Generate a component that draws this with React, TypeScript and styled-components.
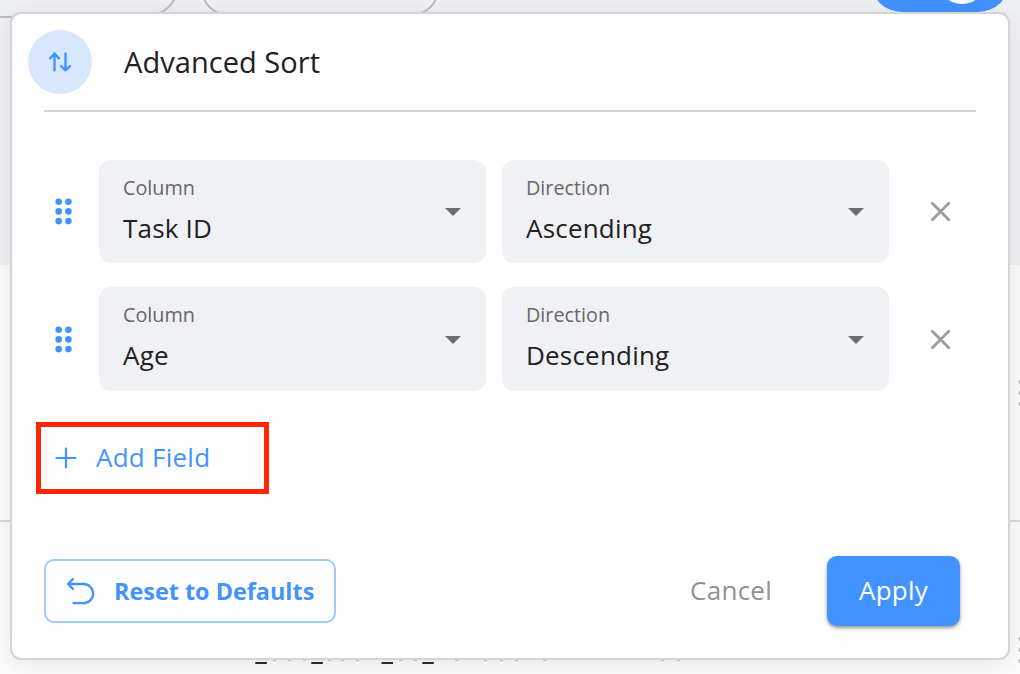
import React from "react";
import styled, { createGlobalStyle } from "styled-components";

const GlobalStyle = createGlobalStyle`
  *, *::before, *::after { box-sizing: border-box; }
  body { margin: 0; overflow: hidden; font-family: "Open Sans", "Noto Sans", sans-serif; font-weight: 440; }
  button { font: inherit; border: 0; background: none; padding: 0; margin: 0; cursor: pointer; }
`;

const Page = styled.div`
  position: relative;
  width: 1020px;
  height: 674px;
  overflow: hidden;
  background: #fcfcfc;
`;

const Backdrop = styled.svg`
  position: absolute;
  left: 0;
  top: 0;
`;

const Dialog = styled.section`
  position: relative;
  display: flex;
  flex-direction: column;
  width: 1000px;
  height: 648px;
  margin: 12px 0 0 10px;
  border: 2px solid #d5d5d7;
  border-radius: 11px;
  background: #fefefe;
  box-shadow: 0 4px 28px rgba(0, 0, 0, 0.09);
`;

const Header = styled.header`
  display: flex;
  align-items: center;
  gap: 32px;
  height: 96px;
  padding-left: 16px;
`;

const IconCircle = styled.span`
  display: flex;
  width: 64px;
  height: 64px;
  border-radius: 50%;
  background: #d7e7fe;
`;

const Title = styled.h1`
  margin: 0;
  font-size: 29px;
  line-height: 38px;
  font-weight: 440;
  letter-spacing: 0.05px;
  color: #212121;
`;

const Divider = styled.hr`
  width: 932px;
  height: 2px;
  margin: 0 0 0 32px;
  border: 0;
  background: #d5d5d7;
`;

const Rows = styled.div`
  display: flex;
  flex-direction: column;
  gap: 24px;
  padding: 48px 0 0 32px;
`;

const SortRow = styled.div`
  display: flex;
  align-items: center;
  height: 103.45px;
`;

const Handle = styled.span`
  display: flex;
  width: 55px;
  margin-top: 0.8px;
  padding-left: 10px;
`;

const SelectBox = styled.div`
  display: flex;
  align-items: center;
  justify-content: space-between;
  width: 387px;
  height: 103.45px;
  margin-right: 16px;
  padding: 0 25px 0 24px;
  border-radius: 12px;
  background: #f0f1f5;
`;

const Arrow = styled.svg`
  margin-top: 0.8px;
`;

const FieldText = styled.div`
  display: flex;
  flex-direction: column;
  margin-top: -3.6px;
`;

const FieldLabel = styled.span`
  font-size: 19.8px;
  line-height: 26px;
  color: #66676a;
`;

const FieldValue = styled.span`
  margin-top: 10px;
  font-size: 26px;
  line-height: 34px;
  letter-spacing: 0.2px;
  color: #212121;
`;

const Remove = styled.button`
  display: flex;
  margin: 0.8px 0 0 24px;
`;

const AddField = styled.button`
  display: flex;
  align-items: center;
  width: 233px;
  height: 72px;
  margin: 31.1px 0 0 24px;
  padding-left: 14px;
  border: 5px solid #ff2600;
  font-size: 26px;
  color: #4293ff;
`;

const AddText = styled.span`
  margin: -1px 0 0 19px;
  letter-spacing: 0.25px;
`;

const Actions = styled.footer`
  display: flex;
  align-items: center;
  margin: 62px 48px 0 32px;
`;

const Reset = styled.button`
  display: flex;
  align-items: center;
  width: 292px;
  height: 64px;
  padding-left: 20px;
  border: 2px solid #a1c9ff;
  border-radius: 10px;
  font-size: 23.4px;
  font-weight: 700;
  color: #4293ff;
`;

const ResetText = styled.span`
  margin-left: 18px;
  white-space: nowrap;
`;

const Cancel = styled.button`
  margin: -2px 55px 0 auto;
  font-size: 26px;
  letter-spacing: 0.25px;
  color: #919191;
`;

const Apply = styled.button`
  width: 133px;
  height: 70px;
  padding-bottom: 2px;
  border-radius: 10px;
  background: #4293ff;
  box-shadow: 0 2px 3px rgba(0, 0, 0, 0.32), 0 2px 6px rgba(0, 0, 0, 0.12);
  font-size: 26px;
  letter-spacing: 0.2px;
  color: #fff;
`;

const underscores = [255.3, 311.3, 381.5, 422.3];
const descenders = [273, 288, 303, 328, 341, 356, 399, 414, 455, 484, 500, 515, 543, 661, 677];

const Background = () => (
  <Backdrop width="1020" height="674" viewBox="0 0 1020 674">
    <rect width="1020" height="265" fill="#f0f1f5" />
    <path d="M0 17H12" stroke="#bdbdbd" strokeWidth="2" />
    <path d="M0 521H1020" stroke="#dcdcdc" strokeWidth="2" />
    <path d="M174.500 -1Q170 8 160 13M204 -1Q208 8 218 13M436 -1Q432 8 422 13" fill="none" stroke="#bdbdbd" strokeWidth="2" />
    <rect x="870" y="-52" width="140" height="64" rx="32" fill="#4293ff" />
    <circle cx="962" cy="-20" r="24" fill="#fff" />
    {[382, 393, 404, 639, 650, 661].map((y) => (
      <circle key={y} cx="1020.500" cy={y} r="2" fill="#b2b2b2" />
    ))}
    {underscores.map((x) => (
      <rect key={x} x={x} y="662" width="11.500" height="2" fill="#2a2a2a" />
    ))}
    {descenders.map((x) => (
      <rect key={x} x={x} y="660" width="3" height="1" fill="#c5c5c5" />
    ))}
  </Backdrop>
);

const SortIcon = () => (
  <svg width="64" height="64" viewBox="0 0 64 64" fill="none" stroke="#4293ff" strokeWidth="2.400" strokeLinecap="round" strokeLinejoin="round">
    <path d="M26.500 40.300V23.500M22 28.300L26.500 23.800L31 28.300M37.500 23.500V40.300M33 36L37.500 40.500L42 36" />
  </svg>
);

const DragIcon = () => (
  <svg width="20" height="28" viewBox="0 0 20 28" fill="#4293ff">
    {[3.7, 13.4, 23.1].map((y) => (
      <g key={y}>
        <circle cx="4.700" cy={y} r="3.300" />
        <circle cx="14.400" cy={y} r="3.300" />
      </g>
    ))}
  </svg>
);

const Select = ({ label, value }: { label: string; value: string }) => (
  <SelectBox>
    <FieldText>
      <FieldLabel>{label}</FieldLabel>
      <FieldValue>{value}</FieldValue>
    </FieldText>
    <Arrow width="16" height="8" viewBox="0 0 16 8">
      <path d="M0 0H16L8 8Z" fill="#6b6c6f" />
    </Arrow>
  </SelectBox>
);

const sorts = [
  { column: "Task ID", direction: "Ascending" },
  { column: "Age", direction: "Descending" },
];

export default function App() {
  return (
    <Page>
      <GlobalStyle />
      <Background />
      <Dialog>
        <Header>
          <IconCircle><SortIcon /></IconCircle>
          <Title>Advanced Sort</Title>
        </Header>
        <Divider />
        <Rows>
          {sorts.map((s) => (
            <SortRow key={s.column}>
              <Handle><DragIcon /></Handle>
              <Select label="Column" value={s.column} />
              <Select label="Direction" value={s.direction} />
              <Remove aria-label="Remove">
                <svg width="22" height="22" viewBox="0 0 22 22" stroke="#9b9b9b" strokeWidth="2.800" strokeLinecap="round">
                  <path d="M3.300 2.300L19.800 18.800M19.800 2.300L3.300 18.800" />
                </svg>
              </Remove>
            </SortRow>
          ))}
        </Rows>
        <AddField>
          <svg width="22" height="22" viewBox="0 0 22 22" stroke="#4293ff" strokeWidth="2.200" strokeLinecap="round">
            <path d="M11 1.500V20.500M1.500 11H20.500" />
          </svg>
          <AddText>Add Field</AddText>
        </AddField>
        <Actions>
          <Reset>
            <svg width="30" height="30" viewBox="0 0 30 30" fill="none" stroke="#4293ff" strokeWidth="2.300" strokeLinecap="round" strokeLinejoin="round">
              <path d="M7 3L2 8L7 13M2 8H17.500A9.600 9.600 0 0 1 17.500 27.200H7.500" />
            </svg>
            <ResetText>Reset to Defaults</ResetText>
          </Reset>
          <Cancel>Cancel</Cancel>
          <Apply>Apply</Apply>
        </Actions>
      </Dialog>
    </Page>
  );
}
